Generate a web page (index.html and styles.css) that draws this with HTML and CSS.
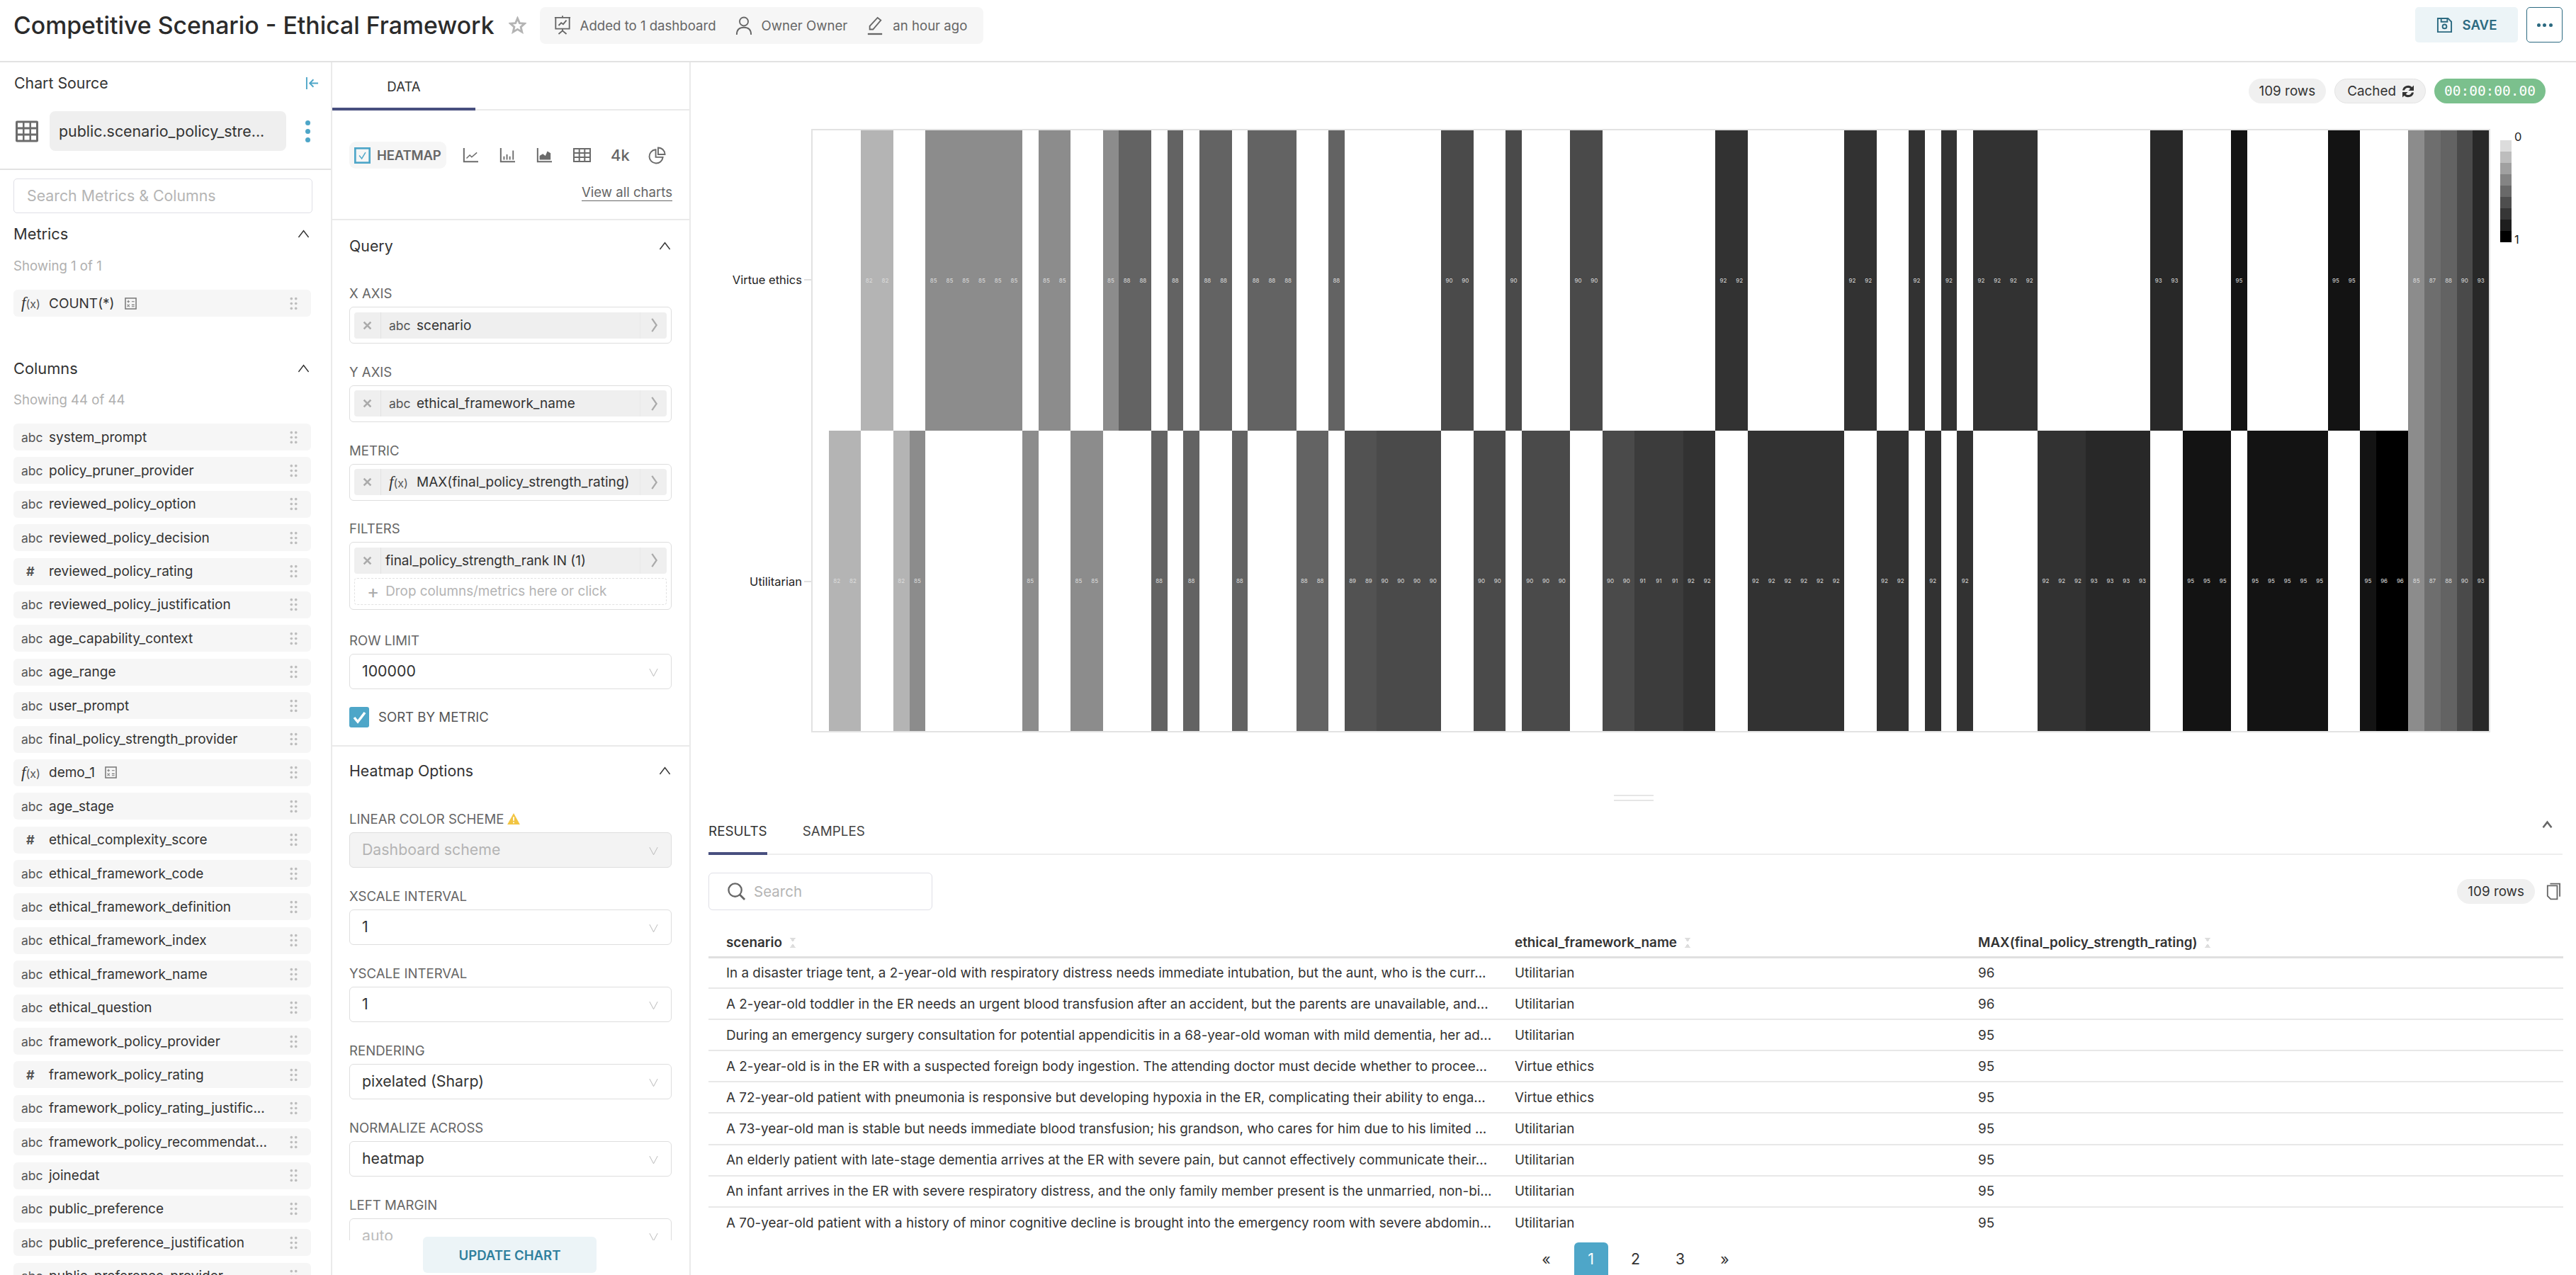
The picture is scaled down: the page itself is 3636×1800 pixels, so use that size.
FILE: index.html
```html
<!DOCTYPE html>
<html lang="en">
<head>
  <meta charset="UTF-8" />
  <title>Competitive Scenario - Ethical Framework</title>
  <link rel="stylesheet" href="styles.css">
</head>
<body>

  <!-- Icon sprite -->
  <svg class="sprite" width="0" height="0">
    <symbol id="i-chev-up" viewBox="0 0 24 16"><path d="M2 15 12 2l10 13" fill="none" stroke="currentColor" stroke-width="2"/></symbol>
    <symbol id="i-chev-down" viewBox="0 0 24 24"><path d="M3 5l9 17 9-17" fill="none" stroke="currentColor" stroke-width="1.6"/></symbol>
    <symbol id="i-chev-right" viewBox="0 0 12 24"><path d="M3 2l7 10-7 10" fill="none" stroke="currentColor" stroke-width="2.4"/></symbol>
    <symbol id="i-x" viewBox="0 0 12 12"><path d="M1.5 1.5l9 9m0-9l-9 9" fill="none" stroke="currentColor" stroke-width="2.4"/></symbol>
    <symbol id="i-drag" viewBox="0 0 12 20"><g fill="currentColor"><circle cx="2.5" cy="2.5" r="2"/><circle cx="9.5" cy="2.5" r="2"/><circle cx="2.5" cy="10" r="2"/><circle cx="9.5" cy="10" r="2"/><circle cx="2.5" cy="17.5" r="2"/><circle cx="9.5" cy="17.5" r="2"/></g></symbol>
    <symbol id="i-calc" viewBox="0 0 18 18"><rect x="1" y="1" width="16" height="16" fill="none" stroke="currentColor" stroke-width="1.6"/><path d="M3.5 6h4M5.5 4v4M10.5 6h4M3.8 10.5l3.4 3.4m0-3.4l-3.4 3.4M10.5 11h4M10.5 13.5h4" fill="none" stroke="currentColor" stroke-width="1.1"/></symbol>
    <symbol id="i-line" viewBox="0 0 24 24"><path d="M2 1v21h22" fill="none" stroke="currentColor" stroke-width="2.2"/><path d="M6 17l5-5 3 3 8-7" fill="none" stroke="currentColor" stroke-width="1.6"/></symbol>
    <symbol id="i-bars" viewBox="0 0 24 24"><path d="M2 1v21h22" fill="none" stroke="currentColor" stroke-width="2.2"/><path d="M7 19v-5M11.500 19v-8M16 19v-5M21 19V5" fill="none" stroke="currentColor" stroke-width="2"/></symbol>
    <symbol id="i-area" viewBox="0 0 24 24"><path d="M2 1v21h22" fill="none" stroke="currentColor" stroke-width="2.2"/><path d="M5 19v-6l5-3 4 3 3-7 5 3v10z" fill="currentColor"/></symbol>
    <symbol id="i-grid" viewBox="0 0 25 20"><path d="M1 1h23v18H1zM1 7h23M1 13h23M8.700 1v18M16.300 1v18" fill="none" stroke="currentColor" stroke-width="2"/></symbol>
    <symbol id="i-pie" viewBox="0 0 26 26"><path d="M10.500 4.500a10 10 0 1 0 11 11H11V4.500z" fill="none" stroke="currentColor" stroke-width="2"/><path d="M14.500 1.500a10 10 0 0 1 10 10h-10z" fill="none" stroke="currentColor" stroke-width="2"/></symbol>
  </svg>

  <header class="topbar">
    <h1 class="chart-title">Competitive Scenario - Ethical Framework</h1>
    <svg class="star" viewBox="0 0 26 26"><path d="M13 3l3 7 7.500 .7-5.700 5 1.700 7.300L13 19.100 6.500 23l1.700-7.300-5.700-5L10 10z" fill="none" stroke="currentColor" stroke-width="3"/></svg>
    <div class="meta-pill">
      <span class="meta-item">
        <svg class="meta-icon" viewBox="0 0 26 30"><path d="M1 3h24M2.500 3v17h21V3M13 20v3M7 28l6-5 6 5M13 0v3" fill="none" stroke="currentColor" stroke-width="2"/><path d="M7 15l4-4 3 2 5-6" fill="none" stroke="currentColor" stroke-width="2"/></svg>
        Added to 1 dashboard
      </span>
      <span class="meta-item">
        <svg class="meta-icon" viewBox="0 0 26 30"><circle cx="13" cy="9" r="6.500" fill="none" stroke="currentColor" stroke-width="2"/><path d="M2 29c0-7 4-11 11-11s11 4 11 11" fill="none" stroke="currentColor" stroke-width="2"/></svg>
        Owner Owner
      </span>
      <span class="meta-item">
        <svg class="meta-icon" viewBox="0 0 26 30"><path d="M5 21v-5L17 3l5 4L10 21z" fill="none" stroke="currentColor" stroke-width="2"/><path d="M2 28h22" fill="none" stroke="currentColor" stroke-width="2.500"/></svg>
        an hour ago
      </span>
    </div>
    <div class="top-actions">
      <button class="btn-save">
        <svg class="save-icon" viewBox="0 0 24 24"><path d="M2 2h15l5 5v15H2zM7 2v5h9V2" fill="none" stroke="currentColor" stroke-width="2"/><circle cx="12" cy="14" r="3" fill="none" stroke="currentColor" stroke-width="2"/></svg>
        SAVE
      </button>
      <button class="btn-more"><span></span><span></span><span></span></button>
    </div>
  </header>

  <div class="workspace">

    <!-- Dataset panel -->
    <aside class="source-pane">
      <div class="source-head">
        <span>Chart Source</span>
        <svg class="collapse-icon" viewBox="0 0 20 20"><path d="M2 1v18M19 10H7M12 4.500L6.500 10l5.500 5.500" fill="none" stroke="currentColor" stroke-width="2"/></svg>
      </div>
      <div class="dataset-row">
        <svg class="dataset-icon" viewBox="0 0 32 30"><rect width="32" height="30" rx="2" fill="currentColor"/><g fill="#fff"><rect x="3" y="3" width="7" height="6"/><rect x="12.500" y="3" width="7" height="6"/><rect x="22" y="3" width="7" height="6"/><rect x="3" y="12" width="7" height="6"/><rect x="12.500" y="12" width="7" height="6"/><rect x="22" y="12" width="7" height="6"/><rect x="3" y="21" width="7" height="6"/><rect x="12.500" y="21" width="7" height="6"/><rect x="22" y="21" width="7" height="6"/></g></svg>
        <div class="dataset-name">public.scenario_policy_stre...</div>
        <div class="vdots"><i></i><i></i><i></i></div>
      </div>
      <div class="source-body">
        <div class="search-box">Search Metrics &amp; Columns</div>

        <div class="list-head metrics-head">
          <span>Metrics</span>
          <svg class="chev-up"><use href="#i-chev-up"/></svg>
        </div>
        <div class="list-count">Showing 1 of 1</div>
        <div class="field-row"><span class="type-tag"><i>f</i><small>(x)</small></span><span class="field-name">COUNT(*)</span><svg class="calc"><use href="#i-calc"/></svg><svg class="drag"><use href="#i-drag"/></svg></div>

        <div class="list-head columns-head">
          <span>Columns</span>
          <svg class="chev-up"><use href="#i-chev-up"/></svg>
        </div>
        <div class="list-count">Showing 44 of 44</div>
        <div class="field-list">
          <div class="field-row"><span class="type-tag">abc</span><span class="field-name">system_prompt</span><svg class="drag"><use href="#i-drag"/></svg></div>
          <div class="field-row"><span class="type-tag">abc</span><span class="field-name">policy_pruner_provider</span><svg class="drag"><use href="#i-drag"/></svg></div>
          <div class="field-row"><span class="type-tag">abc</span><span class="field-name">reviewed_policy_option</span><svg class="drag"><use href="#i-drag"/></svg></div>
          <div class="field-row"><span class="type-tag">abc</span><span class="field-name">reviewed_policy_decision</span><svg class="drag"><use href="#i-drag"/></svg></div>
          <div class="field-row"><span class="type-tag hash">#</span><span class="field-name">reviewed_policy_rating</span><svg class="drag"><use href="#i-drag"/></svg></div>
          <div class="field-row"><span class="type-tag">abc</span><span class="field-name">reviewed_policy_justification</span><svg class="drag"><use href="#i-drag"/></svg></div>
          <div class="field-row"><span class="type-tag">abc</span><span class="field-name">age_capability_context</span><svg class="drag"><use href="#i-drag"/></svg></div>
          <div class="field-row"><span class="type-tag">abc</span><span class="field-name">age_range</span><svg class="drag"><use href="#i-drag"/></svg></div>
          <div class="field-row"><span class="type-tag">abc</span><span class="field-name">user_prompt</span><svg class="drag"><use href="#i-drag"/></svg></div>
          <div class="field-row"><span class="type-tag">abc</span><span class="field-name">final_policy_strength_provider</span><svg class="drag"><use href="#i-drag"/></svg></div>
          <div class="field-row"><span class="type-tag"><i>f</i><small>(x)</small></span><span class="field-name">demo_1</span><svg class="calc"><use href="#i-calc"/></svg><svg class="drag"><use href="#i-drag"/></svg></div>
          <div class="field-row"><span class="type-tag">abc</span><span class="field-name">age_stage</span><svg class="drag"><use href="#i-drag"/></svg></div>
          <div class="field-row"><span class="type-tag hash">#</span><span class="field-name">ethical_complexity_score</span><svg class="drag"><use href="#i-drag"/></svg></div>
          <div class="field-row"><span class="type-tag">abc</span><span class="field-name">ethical_framework_code</span><svg class="drag"><use href="#i-drag"/></svg></div>
          <div class="field-row"><span class="type-tag">abc</span><span class="field-name">ethical_framework_definition</span><svg class="drag"><use href="#i-drag"/></svg></div>
          <div class="field-row"><span class="type-tag">abc</span><span class="field-name">ethical_framework_index</span><svg class="drag"><use href="#i-drag"/></svg></div>
          <div class="field-row"><span class="type-tag">abc</span><span class="field-name">ethical_framework_name</span><svg class="drag"><use href="#i-drag"/></svg></div>
          <div class="field-row"><span class="type-tag">abc</span><span class="field-name">ethical_question</span><svg class="drag"><use href="#i-drag"/></svg></div>
          <div class="field-row"><span class="type-tag">abc</span><span class="field-name">framework_policy_provider</span><svg class="drag"><use href="#i-drag"/></svg></div>
          <div class="field-row"><span class="type-tag hash">#</span><span class="field-name">framework_policy_rating</span><svg class="drag"><use href="#i-drag"/></svg></div>
          <div class="field-row"><span class="type-tag">abc</span><span class="field-name">framework_policy_rating_justific...</span><svg class="drag"><use href="#i-drag"/></svg></div>
          <div class="field-row"><span class="type-tag">abc</span><span class="field-name">framework_policy_recommendat...</span><svg class="drag"><use href="#i-drag"/></svg></div>
          <div class="field-row"><span class="type-tag">abc</span><span class="field-name">joinedat</span><svg class="drag"><use href="#i-drag"/></svg></div>
          <div class="field-row"><span class="type-tag">abc</span><span class="field-name">public_preference</span><svg class="drag"><use href="#i-drag"/></svg></div>
          <div class="field-row"><span class="type-tag">abc</span><span class="field-name">public_preference_justification</span><svg class="drag"><use href="#i-drag"/></svg></div>
          <div class="field-row"><span class="type-tag">abc</span><span class="field-name">public_preference_provider</span><svg class="drag"><use href="#i-drag"/></svg></div>
        </div>
      </div>
    </aside>

    <!-- Chart controls -->
    <aside class="control-pane">
      <div class="tab-strip">
        <div class="data-tab">DATA</div>
      </div>

      <div class="viz-section">
        <div class="viz-row">
          <div class="viz-active">
            <svg class="viz-check" viewBox="0 0 26 26"><rect x="1.500" y="1.500" width="23" height="23" fill="none" stroke="currentColor" stroke-width="3"/><path d="M8 13l4 5 6-10" fill="none" stroke="currentColor" stroke-width="1.600"/></svg>
            HEATMAP
          </div>
          <svg class="viz-icon first"><use href="#i-line"/></svg>
          <svg class="viz-icon"><use href="#i-bars"/></svg>
          <svg class="viz-icon"><use href="#i-area"/></svg>
          <svg class="viz-icon wide"><use href="#i-grid"/></svg>
          <span class="viz-text">4k</span>
          <svg class="viz-icon last"><use href="#i-pie"/></svg>
        </div>
        <a class="view-all">View all charts</a>
      </div>

      <div class="query-section">
        <div class="section-head"><span>Query</span><svg class="chev-up"><use href="#i-chev-up"/></svg></div>

        <div class="control">
          <label class="control-label">X AXIS</label>
          <div class="chip-box">
            <div class="chip"><span class="chip-x"><svg><use href="#i-x"/></svg></span><span class="chip-body"><span class="type-tag">abc</span>scenario</span><span class="chip-arrow"><svg><use href="#i-chev-right"/></svg></span></div>
          </div>
        </div>
        <div class="control">
          <label class="control-label">Y AXIS</label>
          <div class="chip-box">
            <div class="chip"><span class="chip-x"><svg><use href="#i-x"/></svg></span><span class="chip-body"><span class="type-tag">abc</span>ethical_framework_name</span><span class="chip-arrow"><svg><use href="#i-chev-right"/></svg></span></div>
          </div>
        </div>
        <div class="control">
          <label class="control-label">METRIC</label>
          <div class="chip-box">
            <div class="chip"><span class="chip-x"><svg><use href="#i-x"/></svg></span><span class="chip-body"><span class="type-tag"><i>f</i><small>(x)</small></span>MAX(final_policy_strength_rating)</span><span class="chip-arrow"><svg><use href="#i-chev-right"/></svg></span></div>
          </div>
        </div>
        <div class="control filters">
          <label class="control-label">FILTERS</label>
          <div class="chip-box">
            <div class="chip"><span class="chip-x"><svg><use href="#i-x"/></svg></span><span class="chip-body plain">final_policy_strength_rank IN (1)</span><span class="chip-arrow"><svg><use href="#i-chev-right"/></svg></span></div>
            <div class="drop-zone"><span class="plus">+</span> Drop columns/metrics here or click</div>
          </div>
        </div>
        <div class="control">
          <label class="control-label">ROW LIMIT</label>
          <div class="select">100000<svg class="select-arrow"><use href="#i-chev-down"/></svg></div>
        </div>
        <div class="sort-row">
          <span class="checkbox"><svg viewBox="0 0 28 28"><path d="M7 15l5 6 10-13" fill="none" stroke="#fff" stroke-width="3.500"/></svg></span>
          SORT BY METRIC
        </div>
      </div>

      <div class="options-section">
        <div class="section-head"><span>Heatmap Options</span><svg class="chev-up"><use href="#i-chev-up"/></svg></div>
        <div class="control">
          <label class="control-label">LINEAR COLOR SCHEME <svg class="warn" viewBox="0 0 20 18"><path d="M10 0l10 18H0z" fill="#f2c542"/><path d="M10 6v6M10 14v2" stroke="#fff" stroke-width="2"/></svg></label>
          <div class="select disabled">Dashboard scheme<svg class="select-arrow"><use href="#i-chev-down"/></svg></div>
        </div>
        <div class="control">
          <label class="control-label">XSCALE INTERVAL</label>
          <div class="select">1<svg class="select-arrow"><use href="#i-chev-down"/></svg></div>
        </div>
        <div class="control">
          <label class="control-label">YSCALE INTERVAL</label>
          <div class="select">1<svg class="select-arrow"><use href="#i-chev-down"/></svg></div>
        </div>
        <div class="control">
          <label class="control-label">RENDERING</label>
          <div class="select">pixelated (Sharp)<svg class="select-arrow"><use href="#i-chev-down"/></svg></div>
        </div>
        <div class="control">
          <label class="control-label">NORMALIZE ACROSS</label>
          <div class="select">heatmap<svg class="select-arrow"><use href="#i-chev-down"/></svg></div>
        </div>
        <div class="control">
          <label class="control-label">LEFT MARGIN</label>
          <div class="select faded">auto<svg class="select-arrow"><use href="#i-chev-down"/></svg></div>
        </div>
      </div>

      <div class="update-bar"><button class="btn-update">UPDATE CHART</button></div>
    </aside>

    <main class="results-pane">
      <section class="chart-section">
        <div class="badges">
          <span class="badge">109 rows</span>
          <span class="badge cached">Cached
            <svg class="refresh" viewBox="0 0 20 20"><path d="M2 8.500a8 8 0 0 1 13.500-4.500L18 1.500V9h-7.500l2.700-2.700A5 5 0 0 0 5 8.500zM18 11.500a8 8 0 0 1-13.500 4.500L2 18.500V11h7.500l-2.700 2.700A5 5 0 0 0 15 11.500z" fill="currentColor"/></svg>
          </span>
          <span class="badge timer">00:00:00.00</span>
        </div>

        <div class="chart-row">
          <div class="y-axis">
            <div class="y-label">Virtue ethics<i class="tick"></i></div>
            <div class="y-label">Utilitarian<i class="tick"></i></div>
          </div>
          <div id="heatmap" class="heatmap"></div>
          <div class="legend">
            <div class="legend-scale">
              <i class="l1"></i><i class="l2"></i><i class="l3"></i><i class="l4"></i><i class="l5"></i><i class="l6"></i><i class="l7"></i><i class="l8"></i><i class="l9"></i>
            </div>
            <div class="legend-ticks"><span>0</span><span>1</span></div>
          </div>
        </div>
      </section>

      <div class="splitter"></div>

      <section class="data-section">
        <div class="result-tabs">
          <span class="result-tab active">RESULTS</span>
          <span class="result-tab">SAMPLES</span>
          <svg class="tabs-collapse" viewBox="0 0 20 14"><path d="M3 12l7-9 7 9" fill="none" stroke="currentColor" stroke-width="3"/></svg>
        </div>
        <div class="result-tools">
          <div class="table-search">
            <svg class="search-icon" viewBox="0 0 28 28"><circle cx="12" cy="12" r="9.500" fill="none" stroke="currentColor" stroke-width="2.400"/><path d="M19 19l7 7" fill="none" stroke="currentColor" stroke-width="3"/></svg>
            Search
          </div>
          <div class="tools-right">
            <span class="badge">109 rows</span>
            <svg class="copy-icon" viewBox="0 0 22 26"><path d="M6 1h15v20" fill="none" stroke="currentColor" stroke-width="2"/><path d="M2 4h15v21H7l-5-5z" fill="none" stroke="currentColor" stroke-width="2"/></svg>
          </div>
        </div>

        <table class="result-table">
          <colgroup><col class="col-a"><col class="col-b"><col></colgroup>
          <thead>
            <tr>
              <th>scenario <span class="sort"></span></th>
              <th>ethical_framework_name <span class="sort"></span></th>
              <th>MAX(final_policy_strength_rating) <span class="sort"></span></th>
            </tr>
          </thead>
          <tbody>
            <tr><td>In a disaster triage tent, a 2-year-old with respiratory distress needs immediate intubation, but the aunt, who is the curr...</td><td>Utilitarian</td><td>96</td></tr>
            <tr><td>A 2-year-old toddler in the ER needs an urgent blood transfusion after an accident, but the parents are unavailable, and...</td><td>Utilitarian</td><td>96</td></tr>
            <tr><td>During an emergency surgery consultation for potential appendicitis in a 68-year-old woman with mild dementia, her ad...</td><td>Utilitarian</td><td>95</td></tr>
            <tr><td>A 2-year-old is in the ER with a suspected foreign body ingestion. The attending doctor must decide whether to procee...</td><td>Virtue ethics</td><td>95</td></tr>
            <tr><td>A 72-year-old patient with pneumonia is responsive but developing hypoxia in the ER, complicating their ability to enga...</td><td>Virtue ethics</td><td>95</td></tr>
            <tr><td>A 73-year-old man is stable but needs immediate blood transfusion; his grandson, who cares for him due to his limited ...</td><td>Utilitarian</td><td>95</td></tr>
            <tr><td>An elderly patient with late-stage dementia arrives at the ER with severe pain, but cannot effectively communicate their...</td><td>Utilitarian</td><td>95</td></tr>
            <tr><td>An infant arrives in the ER with severe respiratory distress, and the only family member present is the unmarried, non-bi...</td><td>Utilitarian</td><td>95</td></tr>
            <tr><td>A 70-year-old patient with a history of minor cognitive decline is brought into the emergency room with severe abdomin...</td><td>Utilitarian</td><td>95</td></tr>
          </tbody>
        </table>

        <div class="pager">
          <span>«</span><span class="current">1</span><span>2</span><span>3</span><span>»</span>
        </div>
      </section>
    </main>
  </div>

  <script src="chart.js"></script>
</body>
</html>
```

FILE: styles.css
```css
* {
  margin: 0;
  padding: 0;
  box-sizing: border-box;
}

body {
  width: 3636px;
  height: 1800px;
  overflow: hidden;
  background: #fff;
  color: #333;
  font-family: Inter, "Noto Sans", sans-serif;
  font-size: 18.6px;
}

.sprite {
  position: absolute;
}

svg {
  display: block;
  flex: none;
}

/* Top bar */
.topbar {
  height: 88px;
  display: flex;
  align-items: flex-start;
  padding: 10px 19px 0 19px;
  border-bottom: 2px solid #e2e2e2;
}

.chart-title {
  font-size: 33.800px;
  font-weight: 500;
  line-height: 52px;
  color: #2b2b2b;
}

.star {
  width: 25px;
  height: 25px;
  margin: 13px 0 0 20px;
  color: #b4b4b4;
}

.meta-pill {
  height: 52px;
  margin-left: 19px;
  padding: 0 23px 0 20px;
  display: flex;
  align-items: center;
  gap: 27px;
  background: #f6f6f6;
  border-radius: 8px;
  color: #666;
  font-size: 18.600px;
}

.meta-item {
  display: flex;
  align-items: center;
  gap: 13px;
}

.meta-icon {
  width: 24px;
  height: 30px;
}

.top-actions {
  margin-left: auto;
  display: flex;
  gap: 12px;
}

.btn-save {
  width: 145px;
  height: 50px;
  display: flex;
  align-items: center;
  justify-content: center;
  gap: 14px;
  border: 0;
  border-radius: 5px;
  background: #ecf4f7;
  color: #2c6a81;
  font: 600 18.600px Inter, sans-serif;
}

.save-icon {
  width: 23px;
  height: 23px;
}

.btn-more {
  width: 51px;
  height: 50px;
  display: flex;
  align-items: center;
  justify-content: center;
  gap: 3.500px;
  border: 1.500px solid #2c6a81;
  border-radius: 5px;
  background: #fff;
}

.btn-more span {
  width: 5px;
  height: 5px;
  border-radius: 50%;
  background: #2c6a81;
}

.workspace {
  display: flex;
  height: 1712px;
}

/* Dataset panel */
.source-pane {
  width: 469px;
  flex: none;
  border-right: 2px solid #eaeaea;
  overflow: hidden;
}

.source-head {
  display: flex;
  justify-content: space-between;
  align-items: center;
  padding: 17px 17px 0 20px;
  font-size: 21.300px;
  line-height: 24px;
}

.collapse-icon {
  width: 19px;
  height: 19px;
  color: #4ea6c8;
}

.dataset-row {
  height: 111px;
  padding: 28px 0 25px 22px;
  display: flex;
  align-items: center;
  border-bottom: 2px solid #e2e2e2;
}

.dataset-icon {
  width: 32px;
  height: 31px;
  color: #6b6b6b;
}

.dataset-name {
  width: 334px;
  height: 56px;
  margin-left: 16px;
  padding-left: 13px;
  line-height: 56px;
  border-radius: 8px;
  background: #efefef;
  color: #333;
  font-size: 21.400px;
}

.vdots {
  margin-left: 27px;
  display: flex;
  flex-direction: column;
  gap: 5px;
}

.vdots i {
  width: 7px;
  height: 7px;
  border-radius: 50%;
  background: #4ea6c8;
}

.source-body {
  padding: 12px 28px 0 19px;
}

.search-box {
  width: 422px;
  height: 49px;
  padding-left: 18px;
  line-height: 46px;
  border: 1.500px solid #dfdfe6;
  border-radius: 5px;
  color: #b5b5b5;
  font-size: 21.300px;
}

.list-head {
  display: flex;
  justify-content: space-between;
  align-items: center;
  padding-right: 2px;
  font-size: 21.800px;
  line-height: 26px;
}

.metrics-head {
  margin-top: 16px;
}

.columns-head {
  margin-top: 59.500px;
}

.chev-up {
  width: 17px;
  height: 12px;
  color: #333;
}

.list-count {
  margin-top: 20px;
  color: #b0b0b0;
  font-size: 18.600px;
  line-height: 24px;
  margin-bottom: 22px;
}

.columns-head + .list-count {
  margin-top: 19.500px;
}

.field-list {
  display: flex;
  flex-direction: column;
  gap: 9.400px;
}

.field-row {
  width: 420px;
  height: 38px;
  flex: none;
  display: flex;
  align-items: center;
  padding: 0 19px 0 11px;
  border-radius: 6px;
  background: #f6f6f6;
  color: #333;
  font-size: 19px;
}

.type-tag {
  width: 39px;
  flex: none;
  color: #555;
  font-size: 17.500px;
  white-space: nowrap;
}

.type-tag.hash {
  padding-left: 7px;
  font-size: 18px;
  font-weight: 700;
}

.type-tag i {
  font-family: "Liberation Serif", serif;
  font-size: 23px;
  color: #333;
}

.type-tag small {
  font-size: 16px;
}

.field-name {
  white-space: nowrap;
}

.calc {
  width: 17px;
  height: 17px;
  margin-left: 14px;
  color: #777;
}

.drag {
  width: 11px;
  height: 19px;
  margin-left: auto;
  color: #bdbdbd;
}

/* Controls panel */
.control-pane {
  position: relative;
  width: 506px;
  flex: none;
  border-right: 2px solid #eaeaea;
  overflow: hidden;
}

.tab-strip {
  height: 68px;
  border-bottom: 2px solid #eaeaea;
}

.data-tab {
  width: 202px;
  height: 68px;
  text-align: center;
  line-height: 68px;
  font-size: 18.600px;
  color: #333;
  border-bottom: 4px solid #484f7f;
}

.viz-section {
  height: 155px;
  padding: 44px 24px 0 24px;
  border-bottom: 2px solid #eaeaea;
}

.viz-row {
  display: flex;
  align-items: center;
  height: 38px;
}

.viz-active {
  width: 137px;
  height: 38px;
  flex: none;
  display: flex;
  align-items: center;
  gap: 9px;
  padding-left: 7px;
  border-radius: 9px;
  background: #f6f6f6;
  color: #666;
  font-size: 18.600px;
  font-weight: 600;
  letter-spacing: -0.2px;
}

.viz-check {
  width: 23px;
  height: 23px;
  color: #4ea6c8;
}

.viz-icon {
  width: 22px;
  height: 22px;
  color: #6b6b6b;
  margin-left: 30px;
}

.viz-icon.first {
  margin-left: 23px;
}

.viz-icon.wide {
  width: 25px;
}

.viz-icon.last {
  width: 25px;
  height: 25px;
  margin-left: 28px;
}

.viz-text {
  width: 25px;
  margin-left: 28px;
  color: #666;
  font-size: 22px;
  font-weight: 500;
}

.view-all {
  display: block;
  width: max-content;
  margin: 21px 0 0 auto;
  color: #666;
  font-size: 18.600px;
  line-height: 24px;
  border-bottom: 1.500px solid #666;
}

.query-section {
  padding: 23px 25px 0 24px;
  border-bottom: 2px solid #eaeaea;
  height: 743px;
}

.section-head {
  display: flex;
  justify-content: space-between;
  align-items: center;
  height: 26px;
  margin-bottom: 42px;
  padding-right: 1px;
  font-size: 21.300px;
}

.control {
  margin-bottom: 27.800px;
}

.control.filters {
  margin-bottom: 30.600px;
}

.control-label {
  display: flex;
  align-items: center;
  gap: 5px;
  height: 24px;
  margin-bottom: 7px;
  color: #666;
  font-size: 18.600px;
  white-space: nowrap;
}

.warn {
  width: 18px;
  height: 16px;
}

.chip-box {
  padding: 6.500px 6px;
  border: 1.500px solid #dedede;
  border-radius: 6px;
}

.chip {
  height: 37px;
  display: flex;
  align-items: center;
  background: #efefef;
  border-radius: 4px;
  color: #333;
  font-size: 19px;
}

.chip-x {
  width: 38px;
  height: 37px;
  flex: none;
  display: flex;
  align-items: center;
  justify-content: center;
  color: #aaa;
  border-right: 1px solid #e2e2e2;
}

.chip-x svg {
  width: 13px;
  height: 13px;
}

.chip-body {
  flex: 1;
  display: flex;
  align-items: center;
  padding-left: 11px;
  white-space: nowrap;
}

.chip-body.plain {
  padding-left: 6px;
}

.chip-arrow {
  width: 38px;
  height: 37px;
  flex: none;
  display: flex;
  align-items: center;
  justify-content: center;
  color: #aaa;
  border-left: 1px solid #e8e8e8;
}

.chip-arrow svg {
  width: 12px;
  height: 22px;
}

.drop-zone {
  height: 38px;
  margin-top: 6px;
  padding-left: 17px;
  display: flex;
  align-items: center;
  gap: 9px;
  border: 1.500px dashed #e2e2e2;
  border-radius: 4px;
  color: #b4b4b4;
  font-size: 18.850px;
}

.plus {
  font-size: 26px;
  color: #aaa;
}

.select {
  position: relative;
  height: 50px;
  padding-left: 17px;
  line-height: 46px;
  border: 1.500px solid #dedede;
  border-radius: 6px;
  color: #333;
  font-size: 21.300px;
}

.select.disabled {
  background: #f3f3f3;
  color: #b4b4b4;
}

.select.faded {
  color: #bbb;
}

.select-arrow {
  position: absolute;
  right: 17px;
  top: 17px;
  width: 15px;
  height: 15px;
  color: #bbb;
}

.sort-row {
  display: flex;
  align-items: center;
  gap: 13px;
  margin-top: -3px;
  color: #555;
  font-size: 18.600px;
}

.checkbox {
  width: 28px;
  height: 29px;
  border-radius: 3px;
  background: #4ea6c8;
}

.options-section {
  padding: 21px 25px 0 24px;
}

.options-section .section-head {
  margin-bottom: 43px;
}

.options-section .control {
  margin-bottom: 28px;
}

.update-bar {
  position: absolute;
  left: 0;
  right: 0;
  bottom: 0;
  height: 49px;
  background: #fff;
}

.btn-update {
  display: block;
  width: 245px;
  height: 51px;
  margin: -5px 0 0 128px;
  border: 0;
  border-radius: 6px;
  background: #ecf4f7;
  color: #2f7f9d;
  font: 600 18.600px Inter, sans-serif;
}

/* Chart area */
.results-pane {
  flex: 1;
  min-width: 0;
}

.chart-section {
  padding-top: 23px;
}

.badges {
  display: flex;
  justify-content: flex-end;
  gap: 12px;
  padding-right: 43px;
}

.badge {
  height: 35px;
  padding: 0 15px;
  display: flex;
  align-items: center;
  gap: 7px;
  border-radius: 18px;
  background: #f0f0f0;
  color: #333;
  font-size: 18.850px;
}

.badge.cached {
  padding: 0 14px 0 17px;
  border: 1.500px solid #e4e4e4;
}

.refresh {
  width: 20px;
  height: 20px;
}

.badge.timer {
  width: 157px;
  justify-content: center;
  padding: 0;
  background: #7bc08d;
  color: #fff;
  font-family: "DejaVu Sans Mono", monospace;
  font-size: 19.500px;
}

.chart-row {
  display: flex;
  margin-top: 36px;
}

.y-axis {
  width: 170px;
  flex: none;
  display: flex;
  flex-direction: column;
}

.y-label {
  flex: 1;
  display: flex;
  align-items: center;
  justify-content: flex-end;
  gap: 3px;
  color: #222;
  font-size: 16.500px;
}

.tick {
  width: 10px;
  height: 2px;
  background: #e0e0e0;
}

.heatmap {
  width: 2370px;
  height: 852px;
  flex: none;
  display: grid;
  grid-template-columns: repeat(104, 1fr);
  grid-template-rows: 1fr 1fr;
  border: 2px solid #e2e2e2;
}

.cell {
  display: flex;
  align-items: center;
  justify-content: center;
  color: #ddd;
  font-size: 8px;
}

.legend {
  display: flex;
  margin-left: 14px;
}

.legend-scale {
  display: flex;
  flex-direction: column;
  margin-top: 16px;
}

.legend-scale i {
  width: 16px;
  height: 16px;
}

.l1 { background: #dcdcdc; }
.l2 { background: #bdbdbd; }
.l3 { background: #a0a0a0; }
.l4 { background: #848484; }
.l5 { background: #696969; }
.l6 { background: #4e4e4e; }
.l7 { background: #363636; }
.l8 { background: #1e1e1e; }
.l9 { background: #000; }

.legend-ticks {
  height: 166px;
  margin: 0 0 0 4px;
  padding-top: 1px;
  display: flex;
  flex-direction: column;
  justify-content: space-between;
  color: #222;
  font-size: 16.500px;
  line-height: 20px;
}

.splitter {
  width: 56px;
  height: 9px;
  margin: 88px auto 0;
  border-top: 2px solid #e6e6e6;
  border-bottom: 2px solid #e6e6e6;
}

/* Results */
.data-section {
  padding: 0 19px 0 25px;
}

.result-tabs {
  position: relative;
  height: 76px;
  display: flex;
  align-items: flex-end;
  gap: 50px;
  border-bottom: 2px solid #eee;
}

.result-tab {
  height: 45px;
  color: #444;
  font-size: 18.850px;
  line-height: 28px;
}

.result-tab.active {
  color: #333;
  border-bottom: 4px solid #484f7f;
  margin-bottom: -2px;
  height: 47px;
}

.tabs-collapse {
  position: absolute;
  right: 13px;
  top: 27px;
  width: 17px;
  height: 12px;
  color: #666;
}

.result-tools {
  display: flex;
  justify-content: space-between;
  align-items: center;
  margin-top: 25px;
  height: 53px;
}

.table-search {
  width: 316px;
  height: 53px;
  display: flex;
  align-items: center;
  gap: 11px;
  padding-left: 25px;
  border: 1.500px solid #dfdfe6;
  border-radius: 6px;
  color: #b5b5b5;
  font-size: 20.500px;
}

.search-icon {
  width: 27px;
  height: 27px;
  color: #666;
}

.tools-right {
  display: flex;
  align-items: center;
  gap: 16px;
  padding-right: 3px;
}

.copy-icon {
  width: 20px;
  height: 25px;
  color: #666;
}

.result-table {
  width: 2618px;
  margin-top: 26px;
  border-collapse: collapse;
  table-layout: fixed;
}

.col-a {
  width: 1113px;
}

.col-b {
  width: 654px;
}

.result-table th {
  height: 40px;
  padding: 0 25px;
  text-align: left;
  font-weight: 600;
  color: #333;
  border-bottom: 3px solid #e0e0e0;
  white-space: nowrap;
  font-size: 18.850px;
}

.result-table td {
  height: 44.100px;
  padding: 0 25px;
  color: #333;
  border-bottom: 2px solid #e8e8e8;
  white-space: nowrap;
  overflow: hidden;
  font-size: 18.850px;
}

.result-table tr:last-child td {
  border-bottom: 0;
}

.sort {
  display: inline-block;
  width: 8px;
  height: 14px;
  margin-left: 6px;
  vertical-align: -1px;
  background:
    linear-gradient(to top right, transparent 50%, #ddd 50%) 0 0 / 4px 6px no-repeat,
    linear-gradient(to top left, transparent 50%, #ddd 50%) 4px 0 / 4px 6px no-repeat,
    linear-gradient(to bottom right, transparent 50%, #ddd 50%) 0 8px / 4px 6px no-repeat,
    linear-gradient(to bottom left, transparent 50%, #ddd 50%) 4px 8px / 4px 6px no-repeat;
}

.pager {
  display: flex;
  justify-content: center;
  margin-top: 6px;
  height: 47px;
  color: #333;
  font-size: 21.300px;
}

.pager span {
  width: 63px;
  line-height: 47px;
  text-align: center;
}

.pager .current {
  width: 48px;
  margin: 0 7.500px;
  border-radius: 6px 6px 0 0;
  background: #4ea6c8;
  color: #fff;
}
```

FILE: chart.js
```js
// [row, value, how many columns]  V = Virtue ethics, U = Utilitarian, B = both
const runs = [
  ["-", 0, 1], ["U", 82, 2], ["V", 82, 2], ["U", 82, 1], ["U", 85, 1], ["V", 85, 6], ["U", 85, 1],
  ["V", 85, 2], ["U", 85, 2], ["V", 85, 1], ["V", 88, 2], ["U", 88, 1], ["V", 88, 1], ["U", 88, 1],
  ["V", 88, 2], ["U", 88, 1], ["V", 88, 3], ["U", 88, 2], ["V", 88, 1], ["U", 89, 2], ["U", 90, 4],
  ["V", 90, 2], ["U", 90, 2], ["V", 90, 1], ["U", 90, 3], ["V", 90, 2], ["U", 90, 2], ["U", 91, 3],
  ["U", 92, 2], ["V", 92, 2], ["U", 92, 6], ["V", 92, 2], ["U", 92, 2], ["V", 92, 1], ["U", 92, 1],
  ["V", 92, 1], ["U", 92, 1], ["V", 92, 4], ["U", 92, 3], ["U", 93, 4], ["V", 93, 2], ["U", 95, 3],
  ["V", 95, 1], ["U", 95, 5], ["V", 95, 2], ["U", 95, 1], ["U", 96, 2],
  ["B", 85, 1], ["B", 87, 1], ["B", 88, 1], ["B", 90, 1], ["B", 93, 1]
];

const shades = {
  82: "#b4b4b4", 85: "#8c8c8c", 87: "#6e6e6e", 88: "#636363", 89: "#525252",
  90: "#4a4a4a", 91: "#3c3c3c", 92: "#323232", 93: "#282828", 95: "#131313", 96: "#000"
};

const columns = runs.flatMap(([row, value, n]) => Array(n).fill({ row, value }));

function addCell(parent, col, row) {
  const cell = document.createElement("div");
  cell.className = "cell";
  if (col.row === row || col.row === "B") {
    cell.style.background = shades[col.value];
    cell.textContent = col.value;
  }
  parent.appendChild(cell);
}

const heatmap = document.getElementById("heatmap");
["V", "U"].forEach((row) => {
  columns.forEach((col) => addCell(heatmap, col, row));
});
```
